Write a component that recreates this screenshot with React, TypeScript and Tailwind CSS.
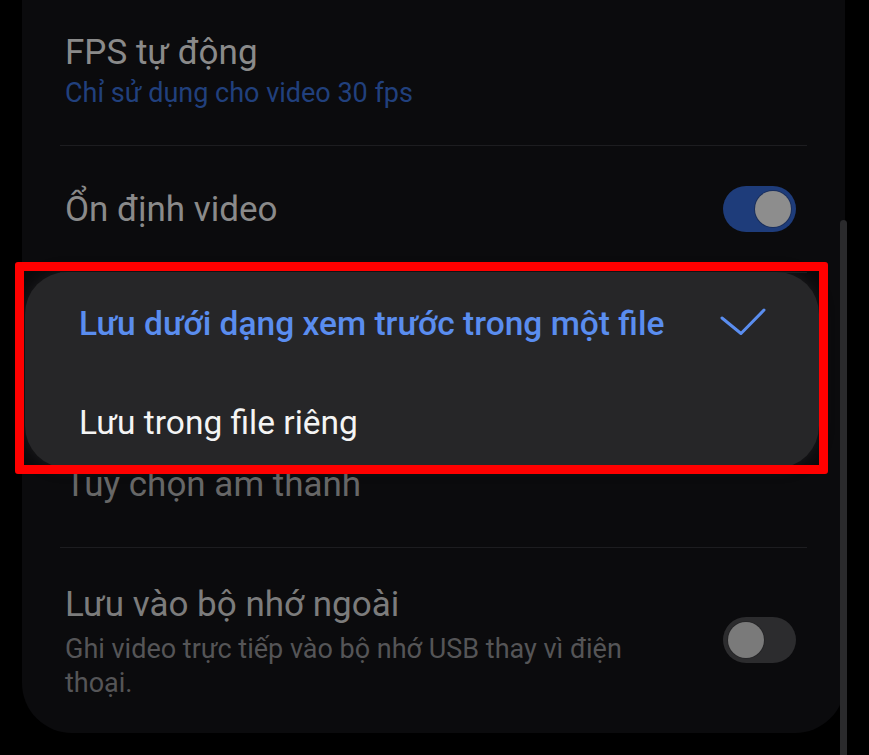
import React from 'react';

const Toggle: React.FC<{ on: boolean }> = ({ on }) => (
  <div
    className={`flex h-[46px] w-[73px] shrink-0 items-center rounded-full px-[5px] ${
      on ? 'justify-end bg-[#1e3c7a]' : 'justify-start bg-[#2c2c2e]'
    }`}
  >
    <span
      className={`block h-[36px] w-[36px] rounded-full ${
        on ? 'bg-[#8d8d8d] ring-1 ring-[#1a2f5c]' : 'bg-[#7a7a7a] ring-1 ring-[#262628]'
      }`}
    />
  </div>
);

const Divider = () => <div className="mx-[38px] h-px bg-[#1d1d20]" />;

const App: React.FC = () => {
  return (
    <div className="relative h-[755px] w-[869px] overflow-hidden bg-black font-['Roboto',_'Noto_Sans',_sans-serif]">
      {/* settings card */}
      <div className="ml-[22px] w-[823px] rounded-b-[50px] bg-[#0b0b0d]">
        <div className="pl-[43px] pt-[32px] pb-[35px]">
          <p className="text-[35px] leading-[42px] text-[#8a8a8a]">FPS tự động</p>
          <p className="mt-[2px] text-[27px] leading-[34px] text-[#21407d]">Chỉ sử dụng cho video 30 fps</p>
        </div>
        <Divider />

        <div className="flex h-[126px] items-center justify-between pl-[43px] pr-[49px]">
          <p className="mt-[2px] text-[35px] leading-[42px] text-[#8a8a8a]">Ổn định video</p>
          <Toggle on />
        </div>
        <Divider />

        <div className="h-[147px]" />
        <Divider />

        <div className="flex h-[126px] items-center pl-[43px]">
          <p className="mt-[2px] text-[35px] leading-[42px] text-[#676767]">Tùy chọn âm thanh</p>
        </div>
        <Divider />

        <div className="flex items-start justify-between pl-[43px] pr-[49px] pt-[36px] pb-[33px]">
          <div>
            <p className="text-[35px] leading-[42px] text-[#7c7c7c]">Lưu vào bộ nhớ ngoài</p>
            <p className="mt-[6px] text-[27px] leading-[34px] text-[#555557]">
              Ghi video trực tiếp vào bộ nhớ USB thay vì điện
              <br />
              thoại.
            </p>
          </div>
          <div className="mt-[33px]">
            <Toggle on={false} />
          </div>
        </div>
      </div>

      {/* scrollbar */}
      <div className="absolute left-[840px] top-[220px] h-[560px] w-[7px] rounded-full bg-[#2a2a2c]" />

      {/* popup menu */}
      <div className="absolute left-[25px] top-[272px] h-[196px] w-[794px] overflow-hidden rounded-[42px] bg-[#262628] pt-[2px] shadow-[0_0_14px_rgba(40,40,44,0.6)]">
        <div className="flex h-[99px] items-center justify-between pl-[54px] pr-[53px]">
          <span className="text-[33.5px] font-medium leading-[40px] text-[#5a8def]">
            Lưu dưới dạng xem trước trong một file
          </span>
          <svg width="46" height="28" viewBox="0 0 46 28" className="mb-[4px]">
            <path
              d="M2 10 L21 25.5 L44 2"
              fill="none"
              stroke="#5a8def"
              strokeWidth="3"
              strokeLinecap="round"
              strokeLinejoin="round"
            />
          </svg>
        </div>
        <div className="flex h-[99px] items-center pl-[54px]">
          <span className="text-[33.5px] leading-[40px] text-[#f4f4f4]">Lưu trong file riêng</span>
        </div>
      </div>

      {/* highlight frame */}
      <div className="pointer-events-none absolute left-[15px] top-[262px] h-[212px] w-[813px] rounded-[3px] border-[9px] border-[#ff0000]" />
    </div>
  );
};

export default App;
